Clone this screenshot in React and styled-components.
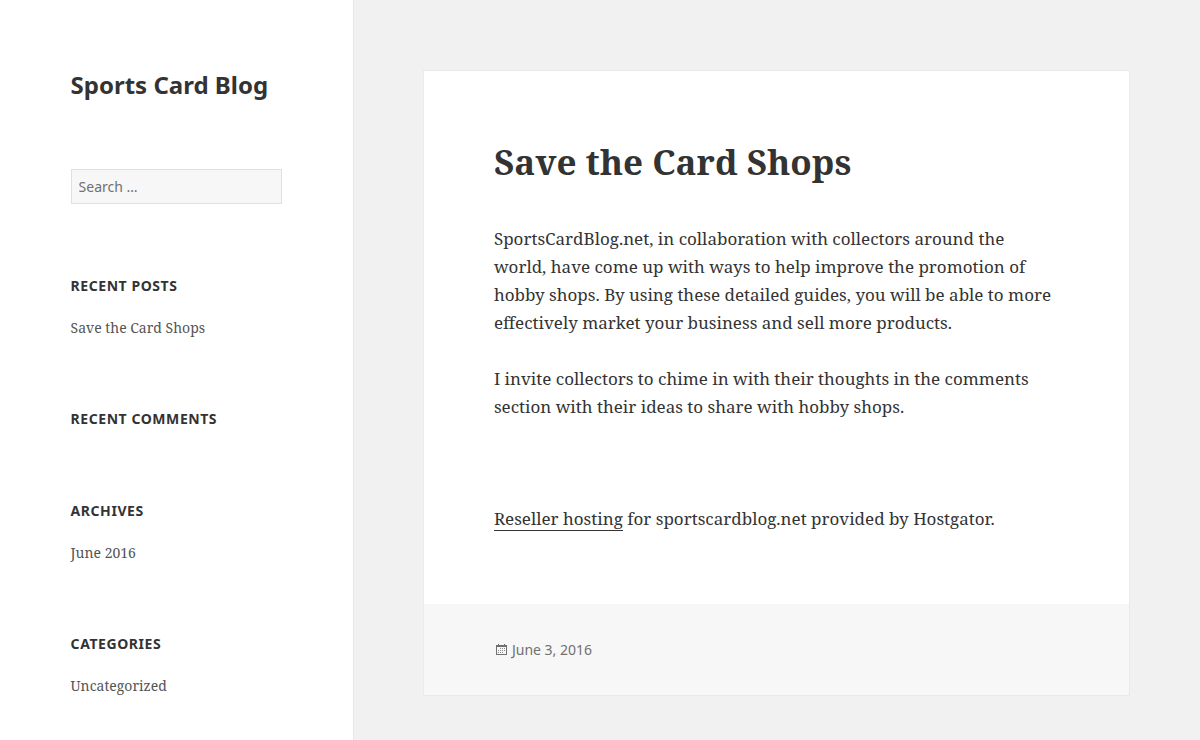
import React from 'react'
import styled, { createGlobalStyle } from 'styled-components'

const recentPosts = ['Save the Card Shops']
const archives = ['June 2016']
const categories = ['Uncategorized']

function Widget({ title, items = [] }) {
    return (
        <WidgetStyled>
            <h2>{title}</h2>
            {items.length > 0 && (
                <ul>
                    {items.map((item) => (
                        <li key={item}><a href="#">{item}</a></li>
                    ))}
                </ul>
            )}
        </WidgetStyled>
    )
}

function CalendarIcon() {
    return (
        <svg width="16" height="16" viewBox="0 0 16 16" aria-hidden="true">
            <path fill="currentColor" fillRule="evenodd" d="M2 3h2V2h1v1h5V2h1v1h2v10H2zM3 5v7h9V5z" />
            <path fill="currentColor" opacity="0.8" d="M6 6h1v1H6zM8 6h1v1H8zM10 6h1v1h-1zM4 8h1v1H4zM6 8h1v1H6zM8 8h1v1H8zM10 8h1v1h-1zM4 10h1v1H4zM6 10h1v1H6zM8 10h1v1H8z" />
        </svg>
    )
}

function App() {
    return (
        <>
            <GlobalStyle />
            <Page>
                <Sidebar>
                    <SiteTitle><a href="#">Sports Card Blog</a></SiteTitle>
                    <SearchForm role="search" onSubmit={(e) => e.preventDefault()}>
                        <input type="search" placeholder="Search …" aria-label="Search for:" />
                    </SearchForm>
                    <Widget title="Recent Posts" items={recentPosts} />
                    <Widget title="Recent Comments" />
                    <Widget title="Archives" items={archives} />
                    <Widget title="Categories" items={categories} />
                </Sidebar>
                <Content>
                    <Article>
                        <EntryTitle>Save the Card Shops</EntryTitle>
                        <EntryContent>
                            <p>
                                SportsCardBlog.net, in collaboration with collectors around the world, have come
                                up with ways to help improve the promotion of hobby shops. By using these
                                detailed guides, you will be able to more effectively market your business and
                                sell more products.
                            </p>
                            <p>
                                I invite collectors to chime in with their thoughts in the comments section with
                                their ideas to share with hobby shops.
                            </p>
                            <p>&nbsp;</p>
                            <p><a href="#">Reseller hosting</a> for sportscardblog.net provided by Hostgator.</p>
                        </EntryContent>
                        <EntryFooter>
                            <CalendarIcon />
                            <a href="#"><time dateTime="2016-06-03">June 3, 2016</time></a>
                        </EntryFooter>
                    </Article>
                </Content>
            </Page>
        </>
    )
}

const GlobalStyle = createGlobalStyle`
    *, *::before, *::after {
        box-sizing: border-box;
    }

    body {
        margin: 0;
        background: #f1f1f1;
        color: #333;
        font-family: "Noto Serif", "Droid Serif", serif;
        font-size: 17px;
        line-height: 28px;
    }

    h1, h2, p, ul {
        margin: 0;
        padding: 0;
    }

    a {
        color: inherit;
        text-decoration: none;
    }
`;

const Page = styled.div`
    display: grid;
    grid-template-columns: 5fr 12fr;
    height: 100vh;
    overflow: hidden;
`;

const Sidebar = styled.aside`
    padding: 68px 20% 0;
    background: #fff;
    box-shadow: 1px 0 0 #e7e7e7;
`;

const SiteTitle = styled.h1`
    font-family: "Noto Sans", sans-serif;
    font-size: 24px;
    font-weight: 700;
    line-height: 34px;
`;

const SearchForm = styled.form`
    margin: 67px 0 70px;

    input {
        display: block;
        width: 100%;
        height: 35px;
        padding: 0 7px;
        border: 1px solid #e0e0e0;
        border-radius: 0;
        background: #f7f7f7;
        color: #707070;
        font-family: "Noto Sans", sans-serif;
        font-size: 14px;
        appearance: none;
    }

    input::placeholder {
        color: #707070;
    }
`;

const WidgetStyled = styled.section`
    margin-bottom: 68px;

    h2 {
        font-family: "Noto Sans", sans-serif;
        font-size: 14px;
        font-weight: 700;
        line-height: 24px;
        letter-spacing: 0.04em;
        text-transform: uppercase;
    }

    ul {
        margin-top: 18px;
        list-style: none;
        font-size: 14px;
        line-height: 23px;
        color: #555;
    }
`;

const Content = styled.main`
    padding: 70px 70px 0;
`;

const Article = styled.article`
    border: 1px solid #eaeaea;
    background: #fff;
`;

const EntryTitle = styled.h1`
    padding: 68px 70px 0;
    font-size: 35px;
    font-weight: 700;
    line-height: 46px;
`;

const EntryContent = styled.div`
    padding: 40px 70px 71px;

    p + p {
        margin-top: 28px;
    }

    a {
        border-bottom: 1px solid #333;
    }
`;

const EntryFooter = styled.footer`
    display: flex;
    align-items: center;
    gap: 2px;
    padding: 34px 70px;
    background: #f7f7f7;
    color: #707070;
    font-family: "Noto Sans", sans-serif;
    font-size: 14px;
    line-height: 23px;
`;

export default App
